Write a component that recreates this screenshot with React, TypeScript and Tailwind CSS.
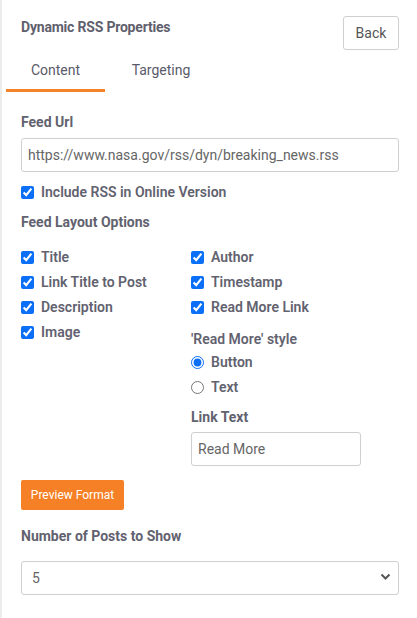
import React, { useState } from 'react';

const Check: React.FC<{ label: string; checked?: boolean }> = ({ label, checked = true }) => {
  const [on, setOn] = useState(checked);
  return (
    <label className="flex items-center gap-[7px] h-[25px] cursor-pointer">
      <input
        type="checkbox"
        checked={on}
        onChange={() => setOn(!on)}
        className="w-[13px] h-[13px] m-0 accent-[#0b6ff7]"
      />
      <span className="font-semibold text-[14px] text-[#62626f]">{label}</span>
    </label>
  );
};

export default function App() {
  const [tab, setTab] = useState('content');
  const [style, setStyle] = useState('button');

  return (
    <div
      className="w-[417px] h-[618px] bg-white border-l-2 border-[#ececec] text-[#62626f] overflow-hidden"
      style={{ fontFamily: 'Roboto, "Noto Sans", sans-serif' }}
    >
      <div className="flex items-start justify-between pl-[19px] pr-[18px] pt-[16px]">
        <h1 className="font-bold text-[14px] tracking-[-0.2px] mt-[1px] text-[#5f5f6d]">Dynamic RSS Properties</h1>
        <button className="h-[34px] w-[56px] border border-[#cfcfcf] rounded-[3px] text-[14px] text-[#555]">Back</button>
      </div>

      <div className="flex pl-[4px] mt-[6px]">
        <button
          onClick={() => setTab('content')}
          className={`w-[99px] h-[36px] text-[14px] text-[#5a5a6a] border-b-[3px] pb-[4px] ${tab === 'content' ? 'border-[#f5832a]' : 'border-transparent'}`}
        >
          Content
        </button>
        <button
          onClick={() => setTab('targeting')}
          className={`w-[112px] h-[36px] text-[14px] text-[#5a5a6a] border-b-[3px] pb-[4px] ${tab === 'targeting' ? 'border-[#f5832a]' : 'border-transparent'}`}
        >
          Targeting
        </button>
      </div>

      <div className="pl-[19px] pr-[18px] pt-[20px]">
        <div className="font-bold text-[14px] h-[20px] leading-[20px]">Feed Url</div>
        <input
          className="mt-[6px] w-full h-[34px] border border-[#cfcfcf] rounded-[3px] px-[6px] text-[14px] text-[#666] outline-none"
          defaultValue="https://www.nasa.gov/rss/dyn/breaking_news.rss"
        />
        <div className="mt-[8px]">
          <Check label="Include RSS in Online Version" />
        </div>
        <div className="font-bold text-[14px] h-[20px] leading-[20px] mt-[7px]">Feed Layout Options</div>

        <div className="grid grid-cols-[170px_1fr] mt-[13px]">
          <div className="flex flex-col">
            <Check label="Title" />
            <Check label="Link Title to Post" />
            <Check label="Description" />
            <Check label="Image" />
          </div>
          <div className="flex flex-col">
            <Check label="Author" />
            <Check label="Timestamp" />
            <Check label="Read More Link" />
            <div className="font-semibold text-[14px] mt-[8px] h-[22px] leading-[22px]">'Read More' style</div>
            {['button', 'text'].map((v) => (
              <label key={v} className="flex items-center gap-[7px] h-[25px] cursor-pointer">
                <input
                  type="radio"
                  name="rm"
                  checked={style === v}
                  onChange={() => setStyle(v)}
                  className="w-[13px] h-[13px] m-0 accent-[#0b6ff7]"
                />
                <span className="font-semibold text-[14px]">{v === 'button' ? 'Button' : 'Text'}</span>
              </label>
            ))}
            <div className="font-bold text-[14px] mt-[7px] h-[20px] leading-[20px]">Link Text</div>
            <input
              className="mt-[5px] w-[170px] h-[34px] border border-[#cfcfcf] rounded-[3px] px-[6px] text-[14px] text-[#666] outline-none"
              defaultValue="Read More"
            />
          </div>
        </div>

        <button className="mt-[14px] h-[30px] w-[103px] bg-[#f58025] rounded-[2px] text-white text-[12px]">
          Preview Format
        </button>

        <div className="font-bold text-[14px] h-[20px] leading-[20px] mt-[16px]">Number of Posts to Show</div>
        <div className="relative mt-[15px]">
          <select className="appearance-none w-full h-[34px] border border-[#cfcfcf] rounded-[3px] pl-[10px] text-[14px] text-[#666] bg-white outline-none">
            <option>5</option>
            <option>10</option>
            <option>15</option>
          </select>
          <svg className="absolute right-[8px] top-[12px] pointer-events-none" width="11" height="8" viewBox="0 0 11 8">
            <path d="M1.5 1.5 L5.5 5.5 L9.5 1.5" stroke="#555" strokeWidth="2" fill="none" />
          </svg>
        </div>
      </div>
    </div>
  );
}
